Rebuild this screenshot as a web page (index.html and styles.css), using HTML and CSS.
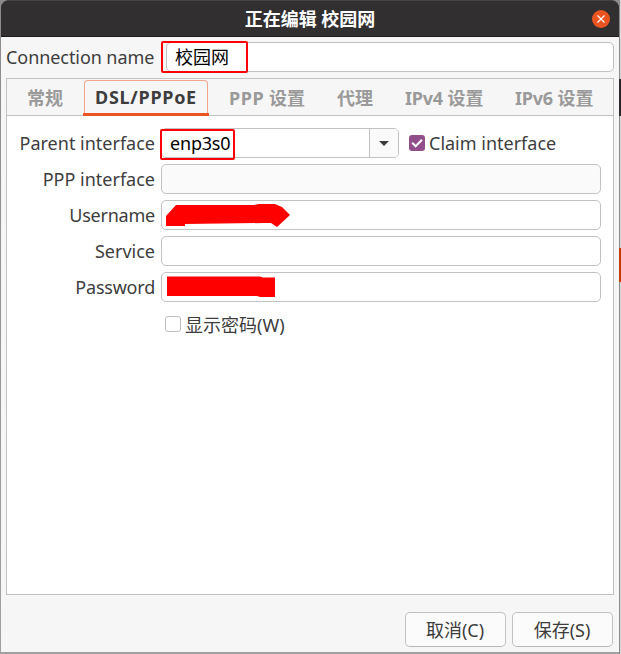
FILE: index.html
```html
<!DOCTYPE html>
<html lang="zh-CN">
<head>
<meta charset="utf-8">
<title>正在编辑 校园网</title>
<link rel="stylesheet" href="styles.css">
</head>
<body>
<main class="dialog">
  <header class="titlebar">
    <h1>正在编辑 校园网</h1>
    <button class="close" aria-label="关闭"><svg viewBox="0 0 18 18" width="18" height="18"><path d="M5.500 5.500l7 7m0-7l-7 7" fill="none" stroke="#fff" stroke-width="1.200"/></svg></button>
  </header>
  <div class="name-row">
    <label class="t-conn">Connection name</label>
    <div class="entry name-entry"><span>校园网</span><i class="mark mark-name"></i></div>
  </div>
  <section class="notebook">
    <nav class="tabs">
      <span class="tab tab-general">常规</span>
      <span class="tab tab-dsl active"><b>DSL/PPPoE</b></span>
      <span class="tab tab-ppp"><b>PPP</b> 设置</span>
      <span class="tab tab-proxy">代理</span>
      <span class="tab tab-v4"><b>IPv4</b> 设置</span>
      <span class="tab tab-v6"><b>IPv6</b> 设置</span>
    </nav>
    <div class="form">
      <label class="t-parent">Parent interface</label>
      <div class="parent-row">
        <div class="entry combo"><span class="t-enp">enp3s0</span><div class="arrow"></div><i class="mark mark-enp"></i></div>
        <div class="check on"><svg viewBox="0 0 16 16" width="16" height="16"><path d="M3.200 7.800l3.400 3.500 6.400-6.600" fill="none" stroke="#fff" stroke-width="2"/></svg></div>
        <span class="t-claim">Claim interface</span>
      </div>
      <label class="t-pppi">PPP interface</label>
      <div class="entry disabled"></div>
      <label class="t-user">Username</label>
      <div class="entry"><svg class="redact" viewBox="0 0 130 28" width="130" height="28"><path d="M4 15L14 4H92L97 3H113L120 6L128 14L115 26L109 22H102L23 23V25H4Z" fill="#f00"/></svg></div>
      <label class="t-service">Service</label>
      <div class="entry"></div>
      <label class="t-pass">Password</label>
      <div class="entry"><svg class="redact" viewBox="0 0 130 28" width="130" height="28"><path d="M5 3.500H98L101 4.500H113V24H98L95 23H5Z" fill="#f00"/></svg></div>
    </div>
    <div class="show-row"><div class="check"></div><span>显示密码<span class="t-w">(W)</span></span></div>
  </section>
  <footer class="actions">
    <button class="btn">取消<span>(C)</span></button>
    <button class="btn">保存<span>(S)</span></button>
  </footer>
</main>
<aside class="backdrop"><i class="dark"></i><i class="orange"></i></aside>
</body>
</html>
```
FILE: styles.css
```css
* { box-sizing: border-box; }
body {
  margin: 0;
  width: 621px;
  height: 654px;
  display: flex;
  overflow: hidden;
  background: linear-gradient(#8b8b8b, #a0a0a0);
  font: 18px/28px "Noto Sans", "Noto Sans CJK SC", sans-serif;
  color: #3d3d3d;
}
.dialog {
  width: 618px;
  height: 652px;
  margin-left: 1px;
  flex: none;
  background: #f6f6f6;
  border-radius: 7px 7px 0 0;
  white-space: nowrap;
}
.titlebar {
  height: 37px;
  padding: 0 9px 0 0;
  background: #322f30;
  border-top: 1px solid #464344;
  border-bottom: 1px solid #1d1b1c;
  border-radius: 7px 7px 0 0;
  display: grid;
  grid-template-columns: 27px 1fr 18px;
  align-items: center;
}
h1 { grid-column: 2; margin: 0; padding-top: 1px; text-align: center; font-size: 18px; line-height: 28px; color: #fff; font-weight: 700; }
.close { width: 18px; height: 18px; padding: 0; border: 0; border-radius: 50%; background: #e95420; display: flex; }
.name-row { display: flex; margin-top: 5px; padding-left: 5px; height: 30px; line-height: 30px; }
.name-row label { width: 155px; }
.t-conn { letter-spacing: -0.07px; }
.entry { position: relative; height: 30px; border: 1px solid #c2c2c2; border-radius: 5px; background: #fff; color: #000; line-height: 28px; }
.name-entry { width: 448px; margin-left: 5px; padding-left: 8px; }
.mark { position: absolute; border: 2px solid #ff0008; border-radius: 2px; }
.mark-name { left: -6px; top: -2px; width: 87px; height: 32px; }
.mark-enp { left: -2px; top: 0; width: 75px; height: 31px; }
.notebook { width: 608px; height: 517px; margin: 6px 0 0 5px; border: 1px solid #c2c2c2; background: #fff; }
.tabs { display: flex; height: 37px; background: #f6f6f6; border-bottom: 1px solid #c2c2c2; color: #9a9a9a; font-weight: 700; }
.tab { height: 37px; line-height: 36px; padding-top: 1px; }
.tab b { font-weight: 700; }
.tab-general { width: 76px; padding-left: 20px; }
.tab-dsl { width: 126px; border-bottom: 3px solid #e95420; color: #3d3d3d; }
.tab-dsl b { display: block; width: 124px; height: 33px; margin-left: 1px; text-align: center; border: 1px solid #f0a58d; border-bottom: 0; border-radius: 4px 4px 0 0; line-height: 33px; letter-spacing: 0.7px; }
.tab-ppp { width: 128px; padding-left: 20px; }
.tab-ppp b { letter-spacing: 0.6px; }
.tab-proxy { width: 68px; }
.tab-v4 { width: 110px; }
.tab-v4 b, .tab-v6 b { letter-spacing: -0.25px; }
.form { display: grid; grid-template-columns: 148px 440px; column-gap: 6px; row-gap: 6px; padding-top: 12px; }
.form > label { text-align: right; line-height: 30px; }
.t-user, .t-pass { letter-spacing: -0.22px; }
.parent-row { display: flex; }
.combo { width: 238px; padding-left: 8px; }
.t-enp { letter-spacing: -0.2px; }
.arrow { position: absolute; right: 0; top: 0; width: 29px; height: 28px; border-left: 1px solid #c2c2c2; border-radius: 0 4px 4px 0; background: #fafafa; }
.arrow::after { content: ""; position: absolute; left: 9px; top: 12px; border: 5px solid transparent; border-top-color: #3d3d3d; border-bottom: 0; }
.check { width: 16px; height: 16px; border: 1px solid #bdbdbd; border-radius: 3px; background: #fff; }
.check.on { margin: 7px 4px 0 10px; background: #924d8b; border: 0; }
.check.on svg { display: block; }
.t-claim { line-height: 30px; }
.disabled { background: #fafafa; }
.redact { position: absolute; left: -0.5px; top: 0; }
.show-row { display: flex; gap: 4px; padding: 10px 0 0 158px; line-height: 26px; }
.show-row .check { margin-top: 4px; }
.actions { display: flex; gap: 6px; margin: 17px 0 0 404px; }
.btn { width: 101px; height: 35px; padding: 0 1px 0 0; border: 1px solid #c2c2c2; border-bottom-color: #b7b7b7; border-radius: 5px; background: #fbfbfb; color: #3d3d3d; font: inherit; line-height: 32px; }
.backdrop { display: flow-root; width: 2px; height: 654px; background: linear-gradient(90deg, #8c8c8c 50%, #d8d8d8 50%); }
.backdrop i { display: block; width: 2px; }
.dark { height: 37px; margin-top: 79px; background: #29272a; }
.orange { height: 34px; margin-top: 132px; background: #c43c00; }
```
